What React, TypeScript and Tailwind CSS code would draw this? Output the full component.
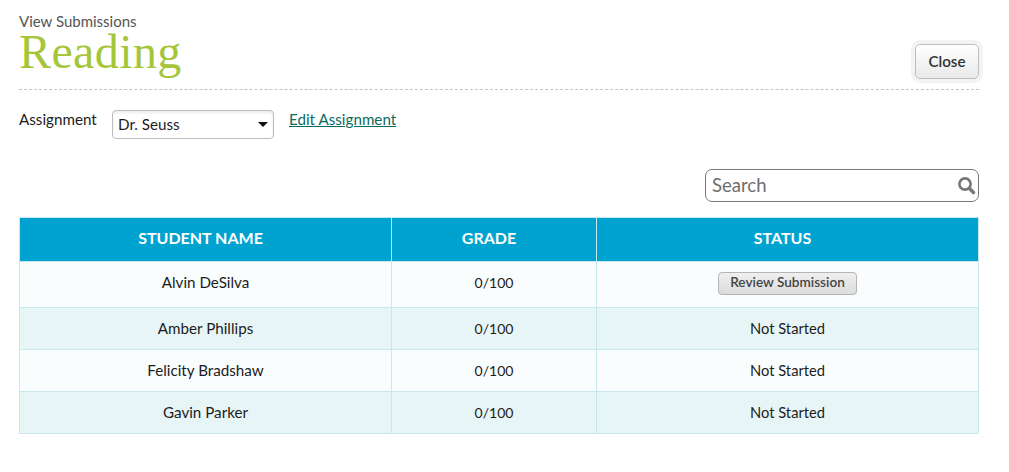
const sans = "font-['Lato','Noto_Sans',sans-serif]";

const students = [
    { name: 'Alvin DeSilva', grade: '0/100', status: null },
    { name: 'Amber Phillips', grade: '0/100', status: 'Not Started' },
    { name: 'Felicity Bradshaw', grade: '0/100', status: 'Not Started' },
    { name: 'Gavin Parker', grade: '0/100', status: 'Not Started' },
];

const App = () => {
    return (
        <div className={`${sans} bg-white w-[1009px] h-[472px] overflow-hidden pl-[19px] pt-[12px] text-[15.2px] text-[#1c1c1c]`}>
            <div className="w-[960px]">
                {/* Header */}
                <div className="h-[78px] border-b border-dashed border-[#c4c4c4] flex justify-between">
                    <div>
                        <div className="text-[15px] leading-[18px] text-[#555]">View Submissions</div>
                        <h1 className="font-['Liberation_Serif',serif] text-[48px] tracking-[0.4px] leading-[44px] text-[#a5c63b]">Reading</h1>
                    </div>
                    <button className="mt-[32px] w-[64px] h-[35px] rounded-[5px] border border-[#bdbdbd] bg-gradient-to-b from-white to-[#e9e9e9] shadow-[0_0_0_4px_#f3f3f3] text-[15.2px] font-semibold text-[#333] leading-none">
                        Close
                    </button>
                </div>

                {/* Assignment */}
                <div className="flex items-start mt-[20px] h-[29px]">
                    <span className="w-[93px] leading-[18px]">Assignment</span>
                    <div className="w-[162px] h-[29px] rounded-[4px] border border-[#bcbcbc] bg-white shadow-[inset_0_2px_3px_rgba(0,0,0,0.08)] flex items-center justify-between pl-[5px] pr-[5px]">
                        <span>Dr. Seuss</span>
                        <svg width="10" height="5" viewBox="0 0 10 5"><path d="M0 0h10L5 5z" fill="#111" /></svg>
                    </div>
                    <a className="ml-[15px] leading-[18px] underline text-[#0b6b62]">Edit Assignment</a>
                </div>

                {/* Search */}
                <div className="flex justify-end mt-[30px]">
                    <div className="w-[274px] h-[33px] rounded-[7px] border border-[#777] flex items-center justify-between pl-[6px] pr-[2px]">
                        <span className="text-[18.5px] text-[#6e6e6e]">Search</span>
                        <svg width="19" height="19" viewBox="0 0 19 19" fill="none">
                            <circle cx="8" cy="8" r="5.6" stroke="#777" strokeWidth="2.6" />
                            <path d="M12.2 12.2l4.3 4.3" stroke="#777" strokeWidth="3.4" strokeLinecap="round" />
                        </svg>
                    </div>
                </div>

                {/* Table */}
                <table className="mt-[15px] w-[960px] table-fixed border-collapse text-center">
                    <colgroup>
                        <col className="w-[372px]" />
                        <col className="w-[205px]" />
                        <col />
                    </colgroup>
                    <thead>
                        <tr className="h-[44px] bg-[#00a3d0] text-white text-[16px] font-bold">
                            <th className="border border-[#c9e8ee] pr-[10px] pb-[4px]">STUDENT NAME</th>
                            <th className="border border-[#c9e8ee] pr-[10px] pb-[4px]">GRADE</th>
                            <th className="border border-[#c9e8ee] pr-[10px] pb-[4px]">STATUS</th>
                        </tr>
                    </thead>
                    <tbody>
                        {students.map((s, i) => (
                            <tr key={s.name} className={i % 2 === 0 ? 'bg-[#f9fdfe]' : 'bg-[#e7f5f6]'}>
                                <td className={`border border-[#c9e8ee] ${i === 0 ? 'h-[46px] pb-[5px]' : 'h-[42px] pb-[1px]'}`}>{s.name}</td>
                                <td className={`border border-[#c9e8ee] text-[14px] ${i === 0 ? 'pb-[5px]' : 'pb-[1px]'}`}>{s.grade}</td>
                                <td className={`border border-[#c9e8ee] text-[14.7px] ${i === 0 ? 'pb-[4px]' : 'pb-[1px]'}`}>
                                    {s.status ?? (
                                        <button className="w-[139px] h-[23px] rounded-[4px] border border-[#b5b5b5] bg-gradient-to-b from-[#efefef] to-[#dcdcdc] text-[13.6px] font-semibold text-[#444] leading-none">
                                            Review Submission
                                        </button>
                                    )}
                                </td>
                            </tr>
                        ))}
                    </tbody>
                </table>
            </div>
        </div>
    );
};

export default App;
